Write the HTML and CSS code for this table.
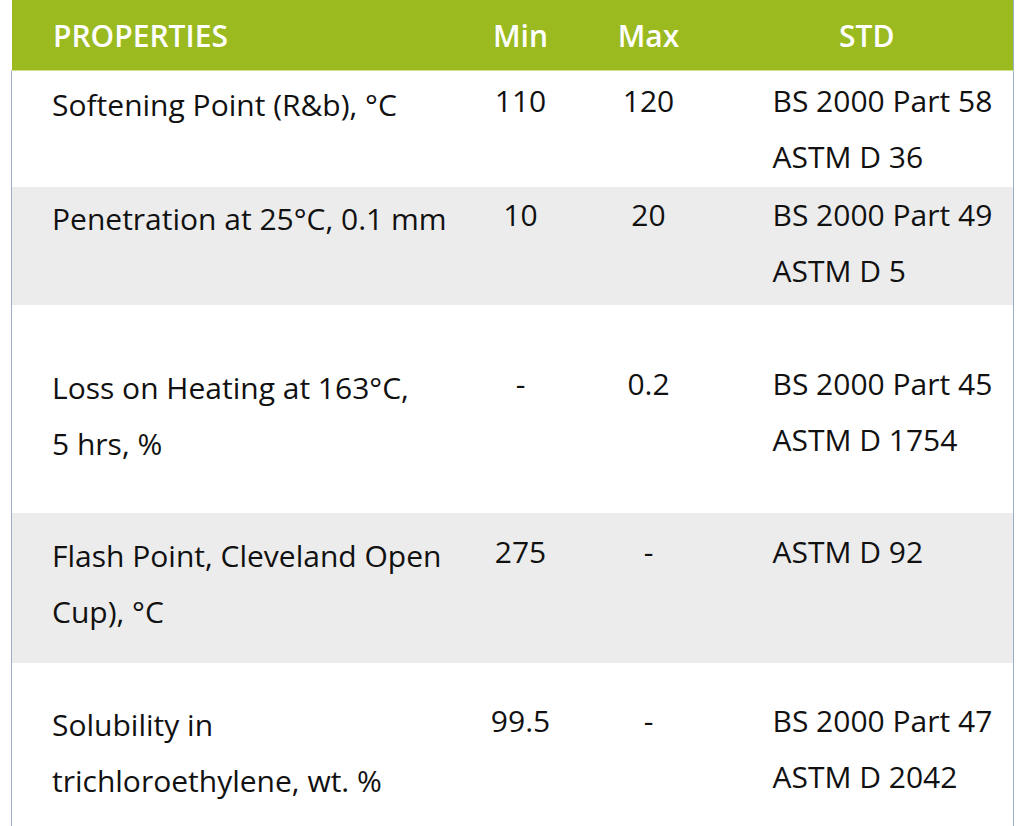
FILE: index.html
```html
<!DOCTYPE html>
<html lang="en">
<head>
<meta charset="utf-8">
<title>Properties</title>
<link rel="stylesheet" href="styles.css">
</head>
<body>
<table class="spec">
  <colgroup>
    <col class="c-prop">
    <col class="c-min">
    <col class="c-max">
    <col class="c-std">
  </colgroup>
  <thead>
    <tr>
      <th class="h-prop">PROPERTIES</th>
      <th>Min</th>
      <th>Max</th>
      <th>STD</th>
    </tr>
  </thead>
  <tbody>
    <tr class="r1">
      <td class="prop">Softening Point (R&amp;b), °C</td>
      <td class="num">110</td>
      <td class="num">120</td>
      <td class="std">BS 2000 Part 58<br>ASTM D 36</td>
    </tr>
    <tr class="r2 alt">
      <td class="prop">Penetration at 25°C, 0.1 mm</td>
      <td class="num">10</td>
      <td class="num">20</td>
      <td class="std">BS 2000 Part 49<br>ASTM D 5</td>
    </tr>
    <tr class="r3">
      <td class="prop">Loss on Heating at 163°C,<br>5 hrs, %</td>
      <td class="num">-</td>
      <td class="num">0.2</td>
      <td class="std">BS 2000 Part 45<br>ASTM D 1754</td>
    </tr>
    <tr class="r4 alt">
      <td class="prop">Flash Point, Cleveland Open<br>Cup), °C</td>
      <td class="num">275</td>
      <td class="num">-</td>
      <td class="std">ASTM D 92</td>
    </tr>
    <tr class="r5">
      <td class="prop">Solubility in<br>trichloroethylene, wt. %</td>
      <td class="num">99.5</td>
      <td class="num">-</td>
      <td class="std">BS 2000 Part 47<br>ASTM D 2042</td>
    </tr>
  </tbody>
</table>
</body>
</html>
```

FILE: styles.css
```css
html, body {
  margin: 0;
  padding: 0;
  background: #ffffff;
}

body {
  padding-left: 11px;
  font-family: "Open Sans", "Noto Sans", "DejaVu Sans", sans-serif;
  color: #111111;
}

.spec {
  border-collapse: collapse;
  table-layout: fixed;
  width: 1002px;
  font-size: 30px;
  line-height: 56px;
}

.c-prop { width: 453px; }
.c-min { width: 112px; }
.c-max { width: 144px; }
.c-std { width: 293px; }

.spec th {
  background: #9aba20;
  color: #ffffff;
  font-weight: 600;
  text-align: center;
  padding: 8px 0 6px 0;
  border-bottom: 1px solid #cfe08c;
}

.spec th:last-child {
  border-right: 1px solid #9aadcb;
}

.spec th.h-prop {
  text-align: left;
  padding-left: 41px;
  border-left: 1px solid #ffffff;
}

.spec td {
  vertical-align: top;
  padding-top: var(--pt);
  padding-bottom: var(--pb);
  white-space: nowrap;
}

.spec td.prop {
  padding-left: 40px;
  padding-top: calc(var(--pt) + 4px);
  padding-bottom: calc(var(--pb) - 4px);
  border-left: 1px solid #9aadcb;
}

.spec td.num {
  text-align: center;
}

.spec td.std {
  padding-left: 52px;
  border-right: 1px solid #9aadcb;
}

.alt td {
  background: #ececec;
}

.r1 { --pt: 2px; --pb: 2px; }
.r2 { --pt: 0px; --pb: 6px; }
.r3 { --pt: 51px; --pb: 45px; }
.r4 { --pt: 11px; --pb: 27px; }
.r5 { --pt: 30px; --pb: 41px; }
```
